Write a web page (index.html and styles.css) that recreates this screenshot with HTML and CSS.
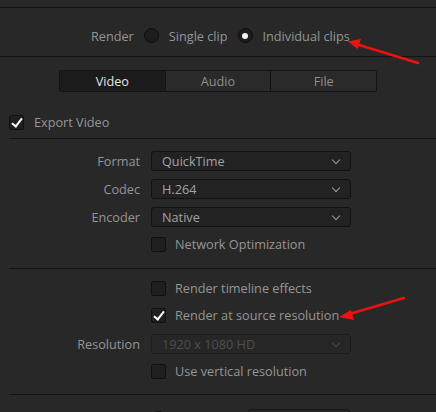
FILE: index.html
```html
<!DOCTYPE html>
<html>
<head>
<meta charset="utf-8">
<link rel="stylesheet" href="styles.css">
</head>
<body>
<div class="page">
  <div class="top-gap"></div>
  <div class="rule"></div>
  <div class="render-row">
    <span class="lbl">Render</span>
    <span class="radio"></span>
    <span class="lbl">Single clip</span>
    <span class="radio on"></span>
    <span class="lbl">Individual clips</span>
  </div>
  <div class="rule"></div>
  <div class="tabs">
    <div class="tab active">Video</div>
    <div class="tab">Audio</div>
    <div class="tab">File</div>
  </div>
  <div class="export-row">
    <span class="check on"></span>
    <span class="lbl">Export Video</span>
  </div>
  <div class="rule indent"></div>
  <div class="section s1">
    <div class="row">
      <span class="field-lbl">Format</span>
      <div class="select"><span>QuickTime</span><i class="chev"></i></div>
    </div>
    <div class="row">
      <span class="field-lbl">Codec</span>
      <div class="select"><span>H.264</span><i class="chev"></i></div>
    </div>
    <div class="row">
      <span class="field-lbl">Encoder</span>
      <div class="select"><span>Native</span><i class="chev"></i></div>
    </div>
    <div class="row crow">
      <span class="field-lbl"></span>
      <div class="cb"><span class="check"></span><span class="lbl">Network Optimization</span></div>
    </div>
  </div>
  <div class="rule indent"></div>
  <div class="section s2">
    <div class="row crow">
      <span class="field-lbl"></span>
      <div class="cb"><span class="check"></span><span class="lbl">Render timeline effects</span></div>
    </div>
    <div class="row crow">
      <span class="field-lbl"></span>
      <div class="cb"><span class="check on"></span><span class="lbl">Render at source resolution</span></div>
    </div>
    <div class="row">
      <span class="field-lbl">Resolution</span>
      <div class="select disabled"><span>1920 x 1080 HD</span><i class="chev"></i></div>
    </div>
    <div class="row crow">
      <span class="field-lbl"></span>
      <div class="cb"><span class="check"></span><span class="lbl">Use vertical resolution</span></div>
    </div>
  </div>
  <div class="rule indent"></div>
  <div class="bottom-row">
    <span class="radio"></span>
    <div class="box"></div>
  </div>

  <svg class="arrows" width="436" height="412" viewBox="0 0 436 412">
    <g stroke="#ee1111" stroke-width="2.6" stroke-linecap="round" fill="#ee1111">
      <line x1="418" y1="63" x2="356" y2="44"/>
      <line x1="404" y1="298" x2="346" y2="315"/>
    </g>
    <polygon points="348,41.5 361,39 357.5,49" fill="#ee1111"/>
    <polygon points="339,317 351,310 354,320" fill="#ee1111"/>
  </svg>
</div>
</body>
</html>
```

FILE: styles.css
```css
* { box-sizing: border-box; }
html, body {
  margin: 0;
  padding: 0;
  background: #282828;
}
body {
  font-family: "Open Sans", "Noto Sans", sans-serif;
  font-size: 12.7px;
  color: #959595;
  width: 436px;
  height: 412px;
  overflow: hidden;
}
.page {
  position: relative;
  width: 436px;
  height: 412px;
}
.top-gap { height: 7px; }
.rule {
  height: 1px;
  background: #121212;
}
.rule.indent { margin-left: 9px; }

.render-row {
  height: 48px;
  display: flex;
  align-items: center;
  gap: 10px;
  padding-left: 91px;
  padding-top: 7px;
}
.lbl {
  white-space: nowrap;
  line-height: 16px;
}

.radio {
  width: 15px;
  height: 15px;
  border-radius: 50%;
  border: 1px solid #0e0e0e;
  background: #1d1d1d;
  position: relative;
  flex: none;
}
.radio.on::after {
  content: "";
  position: absolute;
  left: 3.5px;
  top: 3.5px;
  width: 6px;
  height: 6px;
  border-radius: 50%;
  background: #f2f2f2;
}

.tabs {
  margin: 13px 0 0 59px;
  width: 318px;
  height: 22px;
  display: flex;
  border: 1px solid #141414;
  border-radius: 2px;
  background: #2a2a2a;
}
.tab {
  flex: 1;
  display: flex;
  align-items: center;
  justify-content: center;
  color: #8e8e8e;
  border-left: 1px solid #141414;
}
.tab:first-child { border-left: none; }
.tab.active {
  background: #1b1b1b;
  color: #e4e4e4;
}

.export-row {
  height: 46px;
  display: flex;
  align-items: center;
  gap: 10px;
  padding-left: 9px;
  padding-top: 14px;
}

.check {
  width: 15px;
  height: 15px;
  border: 1px solid #101010;
  border-radius: 2px;
  background: #1f1f1f;
  flex: none;
  position: relative;
}
.check.on::after {
  content: "";
  position: absolute;
  left: 4px;
  top: 0px;
  width: 4px;
  height: 9px;
  border-right: 2px solid #fafafa;
  border-bottom: 2px solid #fafafa;
  transform: rotate(38deg);
}

.section {
  display: flex;
  flex-direction: column;
}
.s1 { padding-top: 12px; gap: 8px; height: 129px; }
.s2 { padding-top: 9px; height: 125px; }

.row {
  display: grid;
  grid-template-columns: 140px 200px;
  column-gap: 11px;
  align-items: center;
  height: 20px;
}
.field-lbl {
  text-align: right;
  white-space: nowrap;
}
.s1 .crow { margin-top: -1px; }
.s2 .row:nth-child(2) { margin-top: 7px; }
.s2 .row:nth-child(3) { margin-top: 9px; }
.s2 .row:nth-child(4) { margin-top: 7px; }

.select {
  height: 20px;
  border: 1px solid #111;
  border-radius: 3px;
  background: #222;
  display: flex;
  align-items: center;
  justify-content: space-between;
  padding: 0 11px 0 10px;
  color: #a2a2a2;
}
.select.disabled {
  background: #262626;
  border-color: #1c1c1c;
  color: #4f4f4f;
}
.chev {
  width: 6px;
  height: 6px;
  border-right: 1.5px solid #9a9a9a;
  border-bottom: 1.5px solid #9a9a9a;
  transform: rotate(45deg);
  margin-top: -3px;
}
.select.disabled .chev { border-color: #4a4a4a; }

.cb {
  display: flex;
  align-items: center;
  gap: 9px;
}

.bottom-row {
  display: flex;
  align-items: flex-start;
  padding-left: 151px;
  padding-top: 14px;
}
.bottom-row .radio { margin-top: 2px; }
.bottom-row .box {
  margin-left: 82px;
  width: 102px;
  height: 20px;
  border: 1px solid #151515;
  border-radius: 3px;
  background: #242424;
}

.arrows {
  position: absolute;
  left: 0;
  top: 0;
  pointer-events: none;
}
```
